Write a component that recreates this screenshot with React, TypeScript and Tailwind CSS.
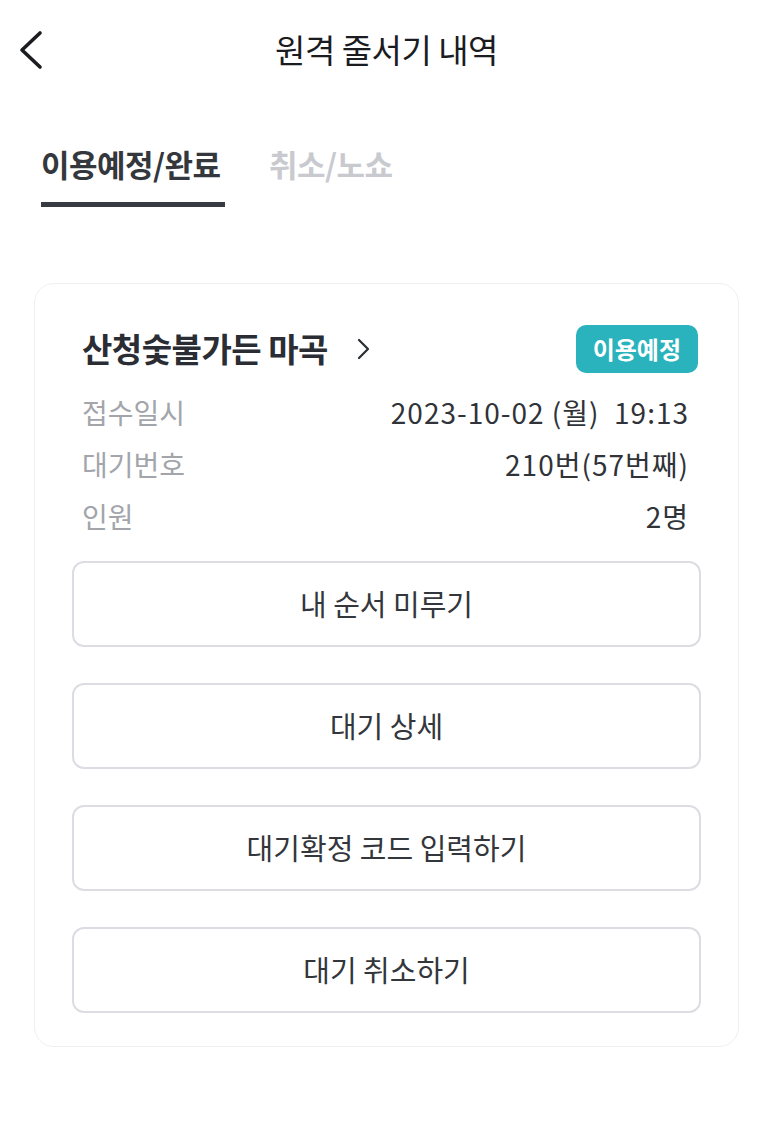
const rows = [
  { label: '접수일시', value: '2023-10-02 (월)  19:13' },
  { label: '대기번호', value: '210번(57번째)' },
  { label: '인원', value: '2명' },
]

const actions = ['내 순서 미루기', '대기 상세', '대기확정 코드 입력하기', '대기 취소하기']

export default function App() {
  return (
    <div
      className="min-h-[1135px] w-[773px] bg-white text-[#2b2e33]"
      style={{ fontFamily: '"Noto Sans CJK KR", "Noto Sans", sans-serif' }}
    >
      {/* Header */}
      <header className="relative flex h-[100px] items-center justify-center">
        <button className="absolute left-[14px] top-[28px] text-[#1b1c1f]">
          <svg width="36" height="44" viewBox="0 0 36 44" fill="none" stroke="currentColor" strokeWidth={3.6} strokeLinecap="round" strokeLinejoin="round">
            <polyline points="26,5 8,22 26,39" />
          </svg>
        </button>
        <h1 className="text-[33px] font-normal tracking-[-0.5px] text-[#1b1c1f]">원격 줄서기 내역</h1>
      </header>

      {/* Tabs */}
      <nav className="mt-[44px] flex gap-[44px] px-[41px]">
        <div className="flex flex-col">
          <span className="text-[31px] font-bold leading-[40px] tracking-[-0.5px] text-[#34373c]">이용예정/완료</span>
          <div className="mt-[18px] h-[5px] w-[184px] bg-[#373a40]" />
        </div>
        <span className="text-[31px] font-bold leading-[40px] tracking-[-0.5px] text-[#c9cacf]">취소/노쇼</span>
      </nav>

      {/* Card */}
      <section className="mx-[34px] mt-[76px] rounded-[20px] border border-[#eef0f2] px-[37px] pb-[33px] pt-[41px]">
        <div className="flex h-[48px] items-center justify-between pl-[10px] pr-[3px]">
          <div className="flex items-center gap-[28px]">
            <span className="text-[33px] font-bold tracking-[-0.5px] text-[#2a2d33]">산청숯불가든 마곡</span>
            <svg width="14" height="22" viewBox="0 0 14 22" fill="none" stroke="#2a2d33" strokeWidth={2.2} strokeLinecap="round" strokeLinejoin="round">
              <polyline points="3,2 12,11 3,20" />
            </svg>
          </div>
          <span className="flex h-[48px] items-center rounded-[10px] bg-[#2bb3bd] px-[17px] text-[24px] font-bold text-white">이용예정</span>
        </div>

        <div className="mt-[13px] flex flex-col pl-[10px] pr-[12px]">
          {rows.map((r) => (
            <div key={r.label} className="flex h-[52px] items-center justify-between text-[28px]">
              <span className="text-[#a2a5aa]">{r.label}</span>
              <span className="whitespace-pre tracking-[1px] text-[#303338]">{r.value}</span>
            </div>
          ))}
        </div>

        <div className="mt-[19px] flex flex-col gap-[36px]">
          {actions.map((a) => (
            <button
              key={a}
              className="flex h-[86px] items-center justify-center rounded-[12px] border-2 border-[#dcdde2] text-[29px] text-[#33363b]"
            >
              {a}
            </button>
          ))}
        </div>
      </section>
    </div>
  )
}
